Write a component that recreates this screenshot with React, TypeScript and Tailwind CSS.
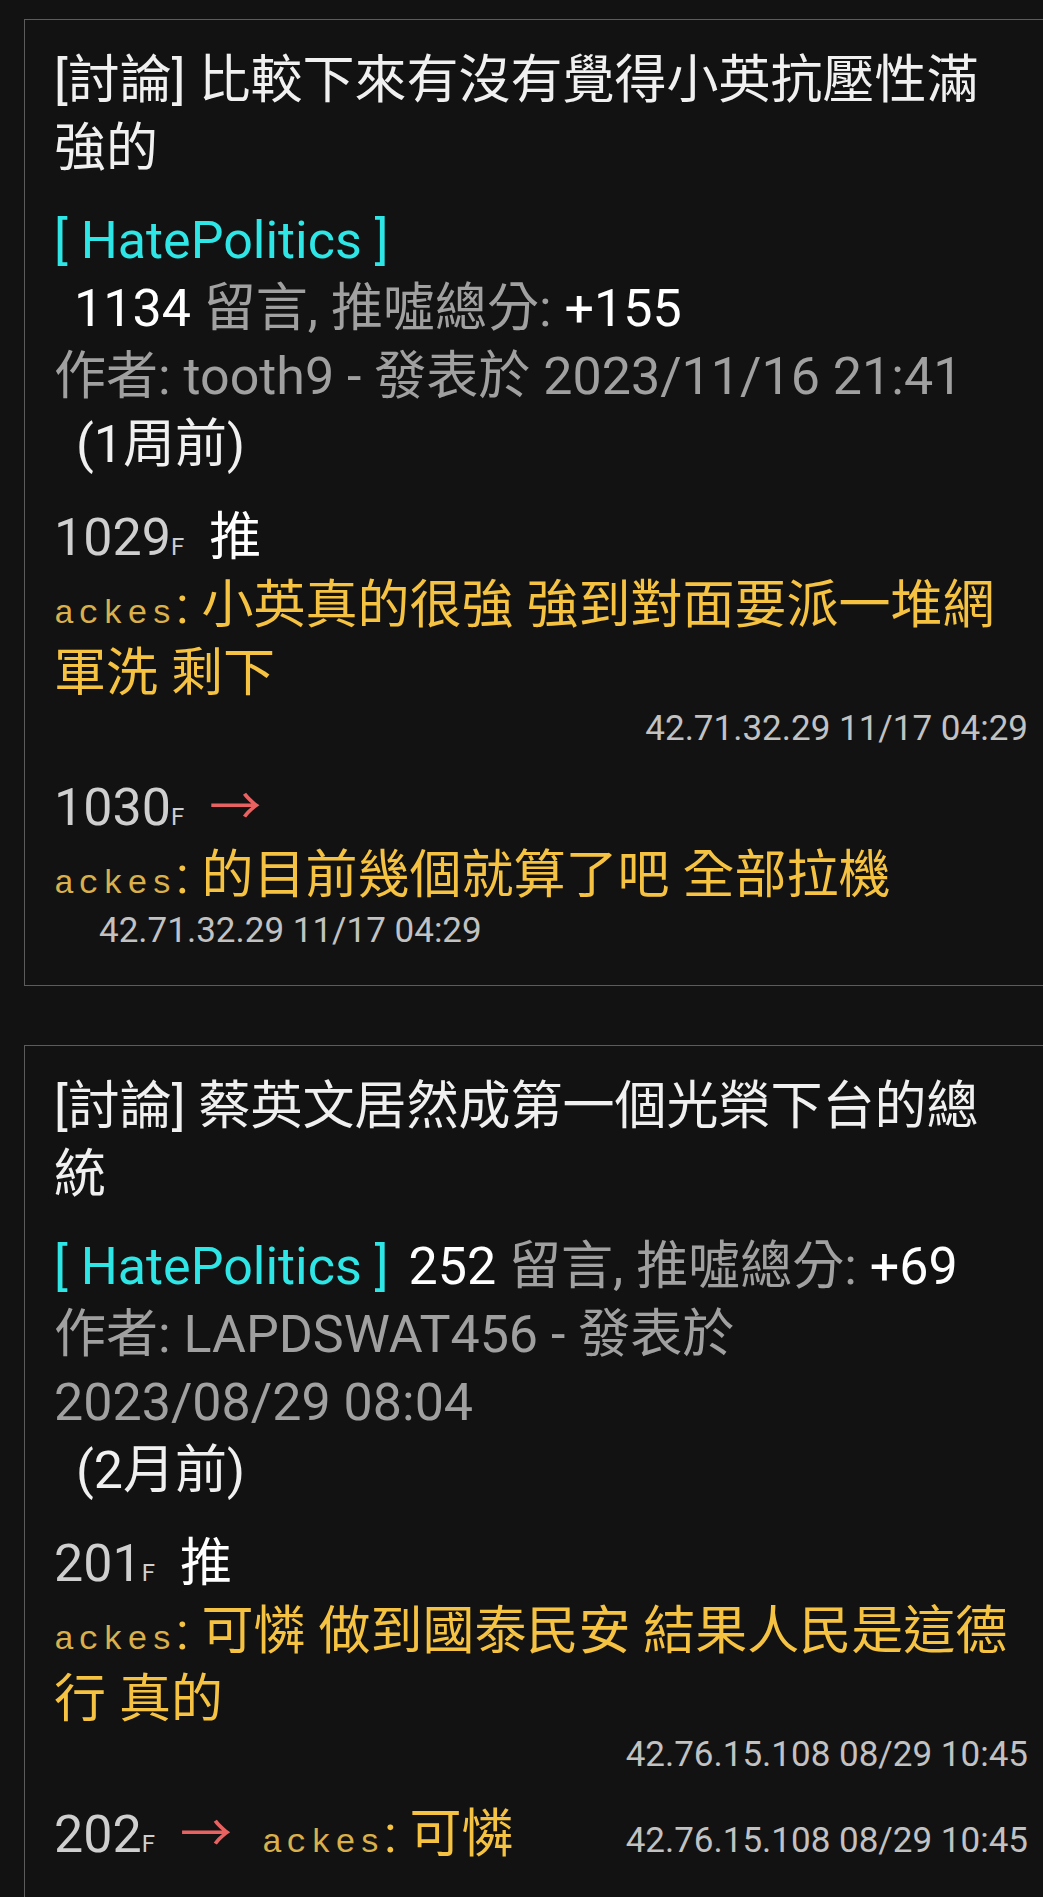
import React from "react";

const Y = "text-[#f5c242]";

function Mono({ children }: { children: React.ReactNode }) {
  return (
    <span className="font-['Liberation_Mono',monospace] text-[34px] leading-none tracking-[4px] text-[#d9b04c]">
      {children}
    </span>
  );
}

function Floor({ n }: { n: string }) {
  return (
    <>
      <span className="text-[#cfcfcf]">{n}</span>
      <span className="text-[24px] leading-none text-[#cfcfcf]">F</span>
    </>
  );
}

function Push() {
  return <span className="ml-[25px] text-white">推</span>;
}

function Arrow() {
  return (
    <span className="ml-[25px] font-['Noto_Sans_CJK_TC',sans-serif] leading-none text-[#e86262]">→</span>
  );
}

function Card({ children, className = "" }: { children: React.ReactNode; className?: string }) {
  return (
    <div
      className={`ml-[24px] mr-[-40px] border border-[#5c5c5c] pl-[29px] pr-[54px] pt-[27px] pb-[33px] ${className}`}
    >
      {children}
    </div>
  );
}

export default function App() {
  return (
    <div className="min-h-screen w-full overflow-hidden bg-[#121212] pt-[19px] font-['Roboto','Noto_Sans_CJK_TC',sans-serif] text-[52px] leading-[68px]">
      <Card>
        <div className="whitespace-nowrap text-[#f0f0f0]">
          [討論] 比較下來有沒有覺得小英抗壓性滿
          <br />
          強的
        </div>
        <div className="mt-[24px] whitespace-nowrap">
          <div className="text-[#2ee6e6]">[ HatePolitics ]</div>
          <div className="pl-[20px]">
            <span className="text-white">1134</span>
            <span className="text-[#a0a0a0]"> 留言, 推噓總分: </span>
            <span className="text-white">+155</span>
          </div>
        </div>
        <div className="whitespace-nowrap text-[#a0a0a0]">作者: tooth9 - 發表於 2023/11/16 21:41</div>
        <div className="whitespace-nowrap pl-[22px] text-[#f0f0f0]">(1周前)</div>

        <div className="mt-[25px]">
          <div className="whitespace-nowrap">
            <Floor n="1029" />
            <Push />
          </div>
          <div className="whitespace-nowrap">
            <Mono>ackes</Mono>
            <span className={Y}>: 小英真的很強 強到對面要派一堆網</span>
          </div>
          <div className={`whitespace-nowrap ${Y}`}>軍洗 剩下</div>
          <div className="text-right text-[35px] leading-[42px] text-[#c2c2c2]">42.71.32.29 11/17 04:29</div>
        </div>

        <div className="mt-[24px]">
          <div className="whitespace-nowrap">
            <Floor n="1030" />
            <Arrow />
          </div>
          <div className="whitespace-nowrap">
            <Mono>ackes</Mono>
            <span className={Y}>: 的目前幾個就算了吧 全部拉機</span>
          </div>
          <div className="pl-[45px] text-[35px] leading-[42px] text-[#c2c2c2]">42.71.32.29 11/17 04:29</div>
        </div>
      </Card>

      <Card className="mt-[59px]">
        <div className="whitespace-nowrap text-[#f0f0f0]">
          [討論] 蔡英文居然成第一個光榮下台的總
          <br />
          統
        </div>
        <div className="mt-[24px] whitespace-nowrap">
          <span className="text-[#2ee6e6]">[ HatePolitics ]</span>
          <span className="ml-[20px] text-white">252</span>
          <span className="text-[#a0a0a0]"> 留言, 推噓總分: </span>
          <span className="text-white">+69</span>
        </div>
        <div className="whitespace-nowrap text-[#a0a0a0]">
          作者: LAPDSWAT456 - 發表於
          <br />
          2023/08/29 08:04
        </div>
        <div className="whitespace-nowrap pl-[22px] text-[#f0f0f0]">(2月前)</div>

        <div className="mt-[25px]">
          <div className="whitespace-nowrap">
            <Floor n="201" />
            <Push />
          </div>
          <div className="whitespace-nowrap">
            <Mono>ackes</Mono>
            <span className={Y}>: 可憐 做到國泰民安 結果人民是這德</span>
          </div>
          <div className={`whitespace-nowrap ${Y}`}>行 真的</div>
          <div className="text-right text-[35px] leading-[42px] text-[#c2c2c2]">42.76.15.108 08/29 10:45</div>
        </div>

        <div className="mt-[25px] flex items-baseline justify-between whitespace-nowrap">
          <div>
            <Floor n="202" />
            <Arrow />
            <span className="ml-[30px]">
              <Mono>ackes</Mono>
            </span>
            <span className={Y}>: 可憐</span>
          </div>
          <div className="text-[35px] leading-[42px] text-[#c2c2c2]">42.76.15.108 08/29 10:45</div>
        </div>
      </Card>
    </div>
  );
}
